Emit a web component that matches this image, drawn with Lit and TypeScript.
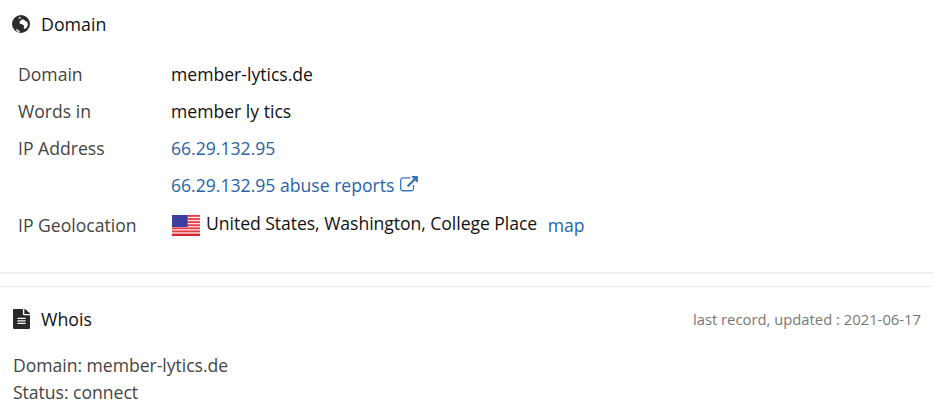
import { LitElement, html, css, svg } from "lit";
import { customElement } from "lit/decorators.js";

const fileAlt = svg`<path d="M224 136V0H24C10.700 0 0 10.700 0 24v464c0 13.300 10.700 24 24 24h336c13.300 0 24-10.700 24-24V160H248c-13.200 0-24-10.800-24-24zm64 236c0 6.600-5.400 12-12 12H108c-6.600 0-12-5.400-12-12v-8c0-6.600 5.400-12 12-12h168c6.600 0 12 5.400 12 12v8zm0-64c0 6.600-5.400 12-12 12H108c-6.600 0-12-5.400-12-12v-8c0-6.600 5.400-12 12-12h168c6.600 0 12 5.400 12 12v8zm0-72v8c0 6.600-5.400 12-12 12H108c-6.600 0-12-5.400-12-12v-8c0-6.600 5.400-12 12-12h168c6.600 0 12 5.400 12 12zm96-114.100v6.100H256V0h6.100c6.400 0 12.500 2.500 17 7l97.900 98c4.500 4.500 7 10.600 7 16.900z"/>`;
const extLink = svg`<path d="M1408 928v320q0 119-84.500 203.500T1120 1536H288q-119 0-203.500-84.500T0 1248V416q0-119 84.500-203.500T288 128h704q14 0 23 9t9 23v64q0 14-9 23t-23 9H288q-66 0-113 47t-47 113v832q0 66 47 113t113 47h832q66 0 113-47t47-113V928q0-14 9-23t23-9h64q14 0 23 9t9 23zm384-864v512q0 26-19 45t-45 19-45-19l-176-176-652 652q-10 10-23 10t-23-10L695 983q-10-10-10-23t10-23l652-652-176-176q-19-19-19-45t19-45 45-19h512q26 0 45 19t19 45z"/>`;

@customElement("app-root")
export class AppRoot extends LitElement {
  static styles = css`
    :host { display: block; height: 411px; overflow: hidden; background: #fff; font-family: "Open Sans", sans-serif; font-size: 17.6px; color: #111; }
    .card { padding: 11px 13px 0 12px; height: 274px; box-sizing: border-box; border-bottom: 2px solid #f0f0f0; }
    .whois { border-top: 1px solid #ececec; margin-top: 12px; padding: 19px 12px 0 13px; }
    .head { display: flex; align-items: center; gap: 11px; height: 25px; font-size: 17.8px; font-weight: 500; color: #111; }
    .head svg { fill: #2b2b2b; width: 18px; height: 18px; flex: none; }
    .head svg.doc { width: 17px; height: 20px; }
    .head .date { margin-left: auto; font-size: 14.8px; font-weight: 400; color: #777; }
    table { border-collapse: collapse; margin: 19px 0 0 6px; }
    td { padding: 0; height: 37px; vertical-align: middle; }
    td.k { width: 153px; color: #444; }
    tr.last td { height: 40px; padding-top: 2px; }
    a { color: #2a62a8; text-decoration: none; }
    .ext { width: 18px; height: 15.4px; margin-left: 1px; vertical-align: 0; fill: #3a76bd; }
    .place { position: relative; top: -2px; letter-spacing: -0.05px; }
    .flag { width: 28px; height: 21px; vertical-align: -5px; margin: 0 6px 0 1px; position: relative; top: -1px; }
    .map { margin-left: 6px; }
    .body { margin-top: 21px; line-height: 27px; color: #444; letter-spacing: -0.03px; }
  `;

  flag() {
    const stripes = Array.from({ length: 7 }, (_, i) => svg`<rect x="0" y=${i * 3.1} width="28" height="1.8" fill="#ec3b45"/>`);
    return html`<svg class="flag" viewBox="0 0 28 21">
      <defs><pattern id="st" width="2" height="2" patternUnits="userSpaceOnUse"><circle cx="1" cy="1" r=".45" fill="#9aa0e0"/></pattern></defs>
      <rect width="28" height="21" fill="#ffe4e4"/>${stripes}
      <rect y="19" width="28" height="2" fill="#d9232e"/>
      <rect width="15.500" height="12" fill="#2f2f96"/><rect width="15.500" height="12" fill="url(#st)"/>
    </svg>`;
  }

  render() {
    return html`
      <section class="card">
        <div class="head"><svg viewBox="0 0 17 17">
          <circle cx="8.500" cy="8.500" r="8.500"/>
          <path fill="#fff" d="M9 4.500c1.500-.5 3 .2 3.500 1.200l2 1 .5 2.500-1 2.500-2 1.500-1-1 .5-2-2-1.500-2-.5-.5-1.500z"/>
          <path fill="#fff" d="M3.500 13.500c1 0 2.500.5 3.500 1.500l.5 1.500c-1.500-.3-3-1.300-4-3zM6 2.500l2-.5.5 1-2 .5z"/>
        </svg>Domain</div>
        <table>
          <tr><td class="k">Domain</td><td>member-lytics.de</td></tr>
          <tr><td class="k">Words in</td><td>member ly tics</td></tr>
          <tr><td class="k">IP Address</td><td><a>66.29.132.95</a></td></tr>
          <tr><td class="k"></td><td><a>66.29.132.95 abuse reports <svg class="ext" viewBox="0 0 1792 1536">${extLink}</svg></a></td></tr>
          <tr class="last"><td class="k">IP Geolocation</td><td>${this.flag()}<span class="place">United States, Washington, College Place</span> <a class="map">map</a></td></tr>
        </table>
      </section>
      <section class="whois">
        <div class="head"><svg class="doc" viewBox="0 0 384 512" preserveAspectRatio="none">${fileAlt}</svg>Whois<span class="date">last record, updated : 2021-06-17</span></div>
        <div class="body">Domain: member-lytics.de<br>Status: connect</div>
      </section>
    `;
  }
}
